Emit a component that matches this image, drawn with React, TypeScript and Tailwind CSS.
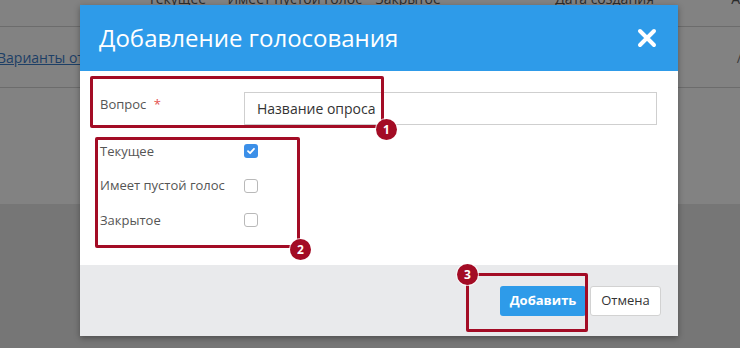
import React from "react";

const font = { fontFamily: '"Open Sans", "Noto Sans", sans-serif' };

function Check({ checked }: { checked?: boolean }) {
  if (checked) {
    return (
      <span className="flex h-[14px] w-[14px] items-center justify-center rounded-[3px] bg-[#3b8fe8]">
        <svg width="10" height="10" viewBox="0 0 10 10">
          <path d="M2 5.2 L4.1 7.2 L8 2.8" fill="none" stroke="#fff" strokeWidth="1.8" strokeLinecap="round" strokeLinejoin="round" />
        </svg>
      </span>
    );
  }
  return <span className="block h-[14px] w-[14px] rounded-[3px] border border-[#b9b9b9] bg-white" />;
}

function Badge({ n, className }: { n: number; className: string }) {
  return (
    <div
      className={
        "absolute flex h-[21px] w-[21px] items-center justify-center rounded-full bg-[#a30c25] text-[12px] font-bold text-white ring-1 ring-white/70 " +
        className
      }
    >
      {n}
    </div>
  );
}

export default function App() {
  const rows = [
    { label: "Текущее", checked: true },
    { label: "Имеет пустой голос", checked: false },
    { label: "Закрытое", checked: false },
  ];

  return (
    <div className="relative h-[348px] w-[740px] overflow-hidden bg-[#767676]" style={font}>
      {/* фон: таблица под затемнением */}
      <div className="h-[204px] bg-[#828282] text-[14px] text-[#2b2b2b]">
        <div className="flex h-[27px] border-b border-[#6c6c6c] leading-[14px]">
          <span className="-mt-[8px] ml-[148px] w-[80px]">Текущее</span>
          <span className="-mt-[8px] w-[149px]">Имеет пустой голос</span>
          <span className="-mt-[8px] w-[181px]">Закрытое</span>
          <span className="-mt-[8px] w-[177px]">Дата создания</span>
          <span className="-mt-[8px]">А</span>
        </div>
        <div className="flex h-[61px] items-center justify-between border-b border-[#6c6c6c]">
          <span className="-ml-[3px] text-[#1d3f66] underline">Варианты ответов</span>
          <span className="mr-[-2px] text-[#3a3a3a]">/</span>
        </div>
      </div>

      {/* модальное окно */}
      <div className="absolute left-[80px] top-[5px] flex h-[331px] w-[598px] flex-col bg-white shadow-[0_2px_6px_rgba(0,0,0,0.35)]">
        <div className="flex h-[66px] shrink-0 items-center justify-between bg-[#2e9be9] pl-[19px] pr-[21px]">
          <h1 className="text-[24px] leading-none text-white">Добавление голосования</h1>
          <svg width="20" height="20" viewBox="0 0 20 20">
            <path d="M3 3 L17 17 M17 3 L3 17" stroke="#fff" strokeWidth="4" strokeLinecap="round" />
          </svg>
        </div>

        <div className="h-[194px] shrink-0 pl-[20px] pr-[21px] pt-[21px] text-[13px] text-[#555]">
          <div className="flex items-start">
            <span className="mt-[3px] w-[144px]">
              Вопрос <span className="ml-[4px] text-[#e4514f]">*</span>
            </span>
            <div className="flex h-[33px] flex-1 items-center border border-[#cfcfcf] px-[12px] text-[14px] text-[#333]">
              Название опроса
            </div>
          </div>
          <div className="mt-[9px] flex flex-col">
            {rows.map((r) => (
              <div key={r.label} className="flex h-[34.5px] items-center">
                <span className="w-[144px]">{r.label}</span>
                <Check checked={r.checked} />
              </div>
            ))}
          </div>
        </div>

        <div className="flex flex-1 items-center justify-end gap-[4px] bg-[#e9eaec] pr-[17px]">
          <button className="h-[30px] w-[86px] rounded-[3px] bg-[#2e9be9] text-[13px] font-bold text-white">
            Добавить
          </button>
          <button className="h-[30px] w-[71px] rounded-[3px] border border-[#d2d2d2] bg-white text-[13px] text-[#333]">
            Отмена
          </button>
        </div>
      </div>

      {/* пометки */}
      <div className="absolute left-[90px] top-[76px] h-[52px] w-[294px] rounded-[2px] border-[3px] border-[#a30c25]" />
      <Badge n={1} className="left-[376px] top-[119px]" />
      <div className="absolute left-[95px] top-[137px] h-[111px] w-[205px] rounded-[2px] border-[3px] border-[#a30c25]" />
      <Badge n={2} className="left-[290px] top-[239px]" />
      <div className="absolute left-[466px] top-[273px] h-[59px] w-[122px] rounded-[2px] border-[3px] border-[#a30c25]" />
      <Badge n={3} className="left-[457px] top-[264px]" />
    </div>
  );
}
